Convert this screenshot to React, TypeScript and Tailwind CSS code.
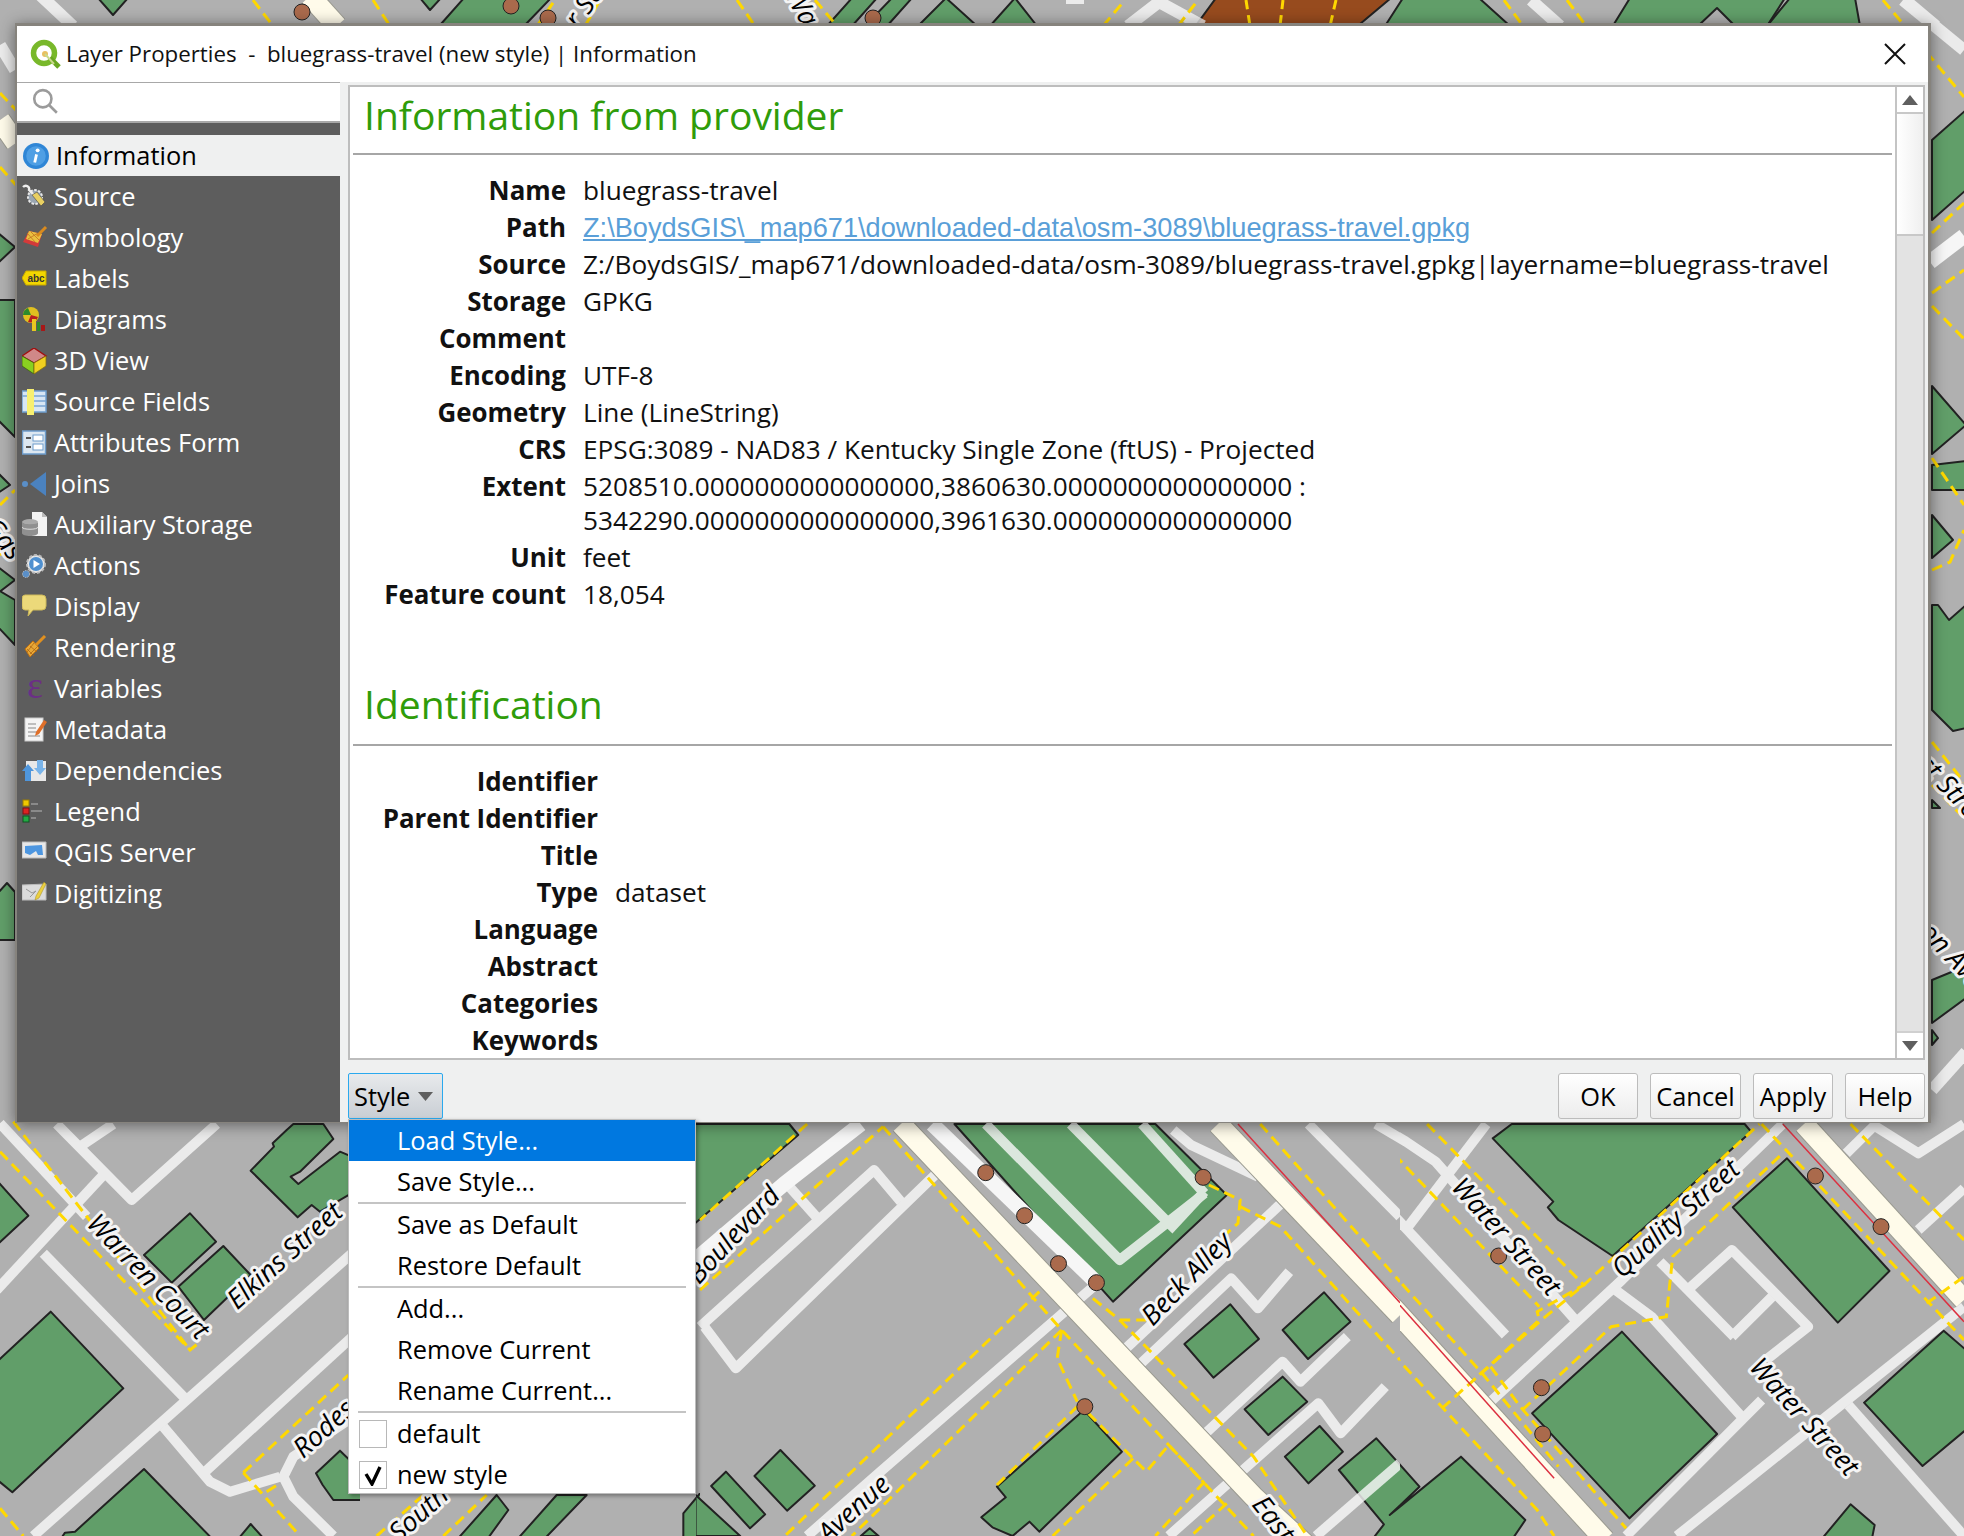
import React from 'react';

type Layer = { b?: string[]; r?: string[]; m?: string[]; y?: string[]; red?: string[]; c?: [number, number][]; brown?: string[]; w?: string[] };

// one piece of the map, drawn in the coordinates of that piece
function Piece({ x, y, w, h, vb, rw = 10, l }: { x: number; y: number; w: number; h: number; vb: string; rw?: number; l: Layer }) {
  const [, , vw, vh] = vb.split(' ').map(Number);
  const rx = (vw / w) * 8;
  const ry = (vh / h) * 8;
  return (
    <svg x={x} y={y} width={w} height={h} viewBox={vb} preserveAspectRatio="none">
      {l.brown?.map((p, i) => <polygon key={i} points={p} fill="#974b1e" stroke="#222" strokeWidth={2} vectorEffect="non-scaling-stroke" />)}
      {l.b?.map((p, i) => <polygon key={i} points={p} fill="#619e69" stroke="#222" strokeWidth={2} strokeLinejoin="round" vectorEffect="non-scaling-stroke" />)}
      <g opacity={0.8}>
        {l.r?.map((p, i) => <polyline key={i} points={p} fill="none" stroke="#fafafa" strokeWidth={rw} strokeLinejoin="round" vectorEffect="non-scaling-stroke" />)}
      </g>
      {l.w?.map((p, i) => <polyline key={i} points={p} fill="none" stroke="#f6f6f6" strokeWidth={15} vectorEffect="non-scaling-stroke" />)}
      {l.m?.map((p, i) => (
        <g key={i}>
          <polyline points={p} fill="none" stroke="#9a9a90" strokeWidth={22} vectorEffect="non-scaling-stroke" />
          <polyline points={p} fill="none" stroke="#fffbea" strokeWidth={20} vectorEffect="non-scaling-stroke" />
        </g>
      ))}
      {l.y?.map((p, i) => <polyline key={i} points={p} fill="none" stroke="#ffd800" strokeWidth={3} strokeDasharray="11 6" vectorEffect="non-scaling-stroke" />)}
      {l.red?.map((p, i) => <polyline key={i} points={p} fill="none" stroke="#dc3040" strokeWidth={1.5} vectorEffect="non-scaling-stroke" />)}
      {l.c?.map(([cx, cy], i) => <ellipse key={i} cx={cx} cy={cy} rx={rx} ry={ry} fill="#aa6a4c" stroke="#222" strokeWidth={1} vectorEffect="non-scaling-stroke" />)}
    </svg>
  );
}

const leftCrop: Layer = {
  b: [
    '570,280 648,365 515,488 432,405',
    '670,378 752,465 612,600 535,500',
    '152,575 370,805 37,1117 -20,1070 -20,735',
    '-20,170 85,287 -20,385',
    '860,30 880,12 970,12 1000,57 900,155 872,170 895,192 1020,95 1080,120 1080,205 960,275 935,255 893,292 752,152 822,80 818,70',
    '432,1047 640,1260 180,1260 195,1238 225,1235',
    '752,1212 795,1260 712,1260',
    '948,1060 1020,992 1090,1060 1090,1140 1000,1140 968,1095',
  ],
  r: [
    '0,10 260,290',
    '170,12 395,240 650,12',
    '-10,510 310,165',
    '240,80 340,12',
    '130,400 560,840',
    '100,1248 1090,370',
    '490,920 630,1085 690,1115 840,1070',
    '610,1060 1090,620',
    '1045,900 880,1010 850,1070 880,1130 1000,1248',
  ],
  y: [
    '40,5 570,690',
    '0,95 570,690 595,670',
    '730,1058 1045,765',
    '730,1058 900,1248',
    '800,1115 840,1090',
    '0,1165 70,1248',
  ],
};

const midCrop: Layer = {
  b: [
    '-20,12 200,12 220,45 -20,320',
    '570,12 1020,12 1180,225 925,545',
    '1188,553 1252,657 1150,773 1085,672',
    '1398,517 1457,605 1362,717 1305,630',
    '1305,770 1360,845 1273,945 1220,868',
    '1388,918 1440,995 1363,1090 1310,1010',
    '1515,955 1612,1100 1545,1185 1705,1010 1849,1200 1819,1260 1505,1260 1532,1213 1431,1050',
    '180,990 257,1097 195,1172 122,1068',
    '58,1055 146,1183 112,1225 25,1098',
    '-10,1125 90,1248 -10,1248',
    '860,870 945,995 760,1235 738,1205 700,1248 655,1222 630,1192 685,1132 665,1100',
    '380,1225 400,1248 360,1248',
  ],
  r: [
    '0,620 390,150 450,245',
    '260,290 200,200',
    '10,620 80,745 530,160',
    '640,12 940,420 1130,220',
    '830,12 1050,310',
    '990,12 1130,220',
    '1050,330 1130,215',
    '890,490 400,1060 240,1248',
    '950,690 1310,240',
    '980,740 1190,475 1250,565 1320,455',
    '1120,955 1305,725 1345,785 1450,650',
    '1050,1248 1385,850 1435,940 1535,800',
    '1380,1248 1568,1030',
    '1060,30 1100,75 1250,170',
    '1363,12 1568,290',
    '1514,12 1581,65',
  ],
  w: ['360,12 190,190 -20,430', '520,12 890,490'],
  m: ['450,12 1240,1130 1370,1290', '1160,12 1568,586'],
  y: [
    '240,12 0,300',
    '0,510 410,20',
    '410,20 810,630 1130,1090',
    '760,515 190,1248',
    '810,630 340,1248',
    '810,630 800,715 845,845',
    '880,535 940,600 1000,600',
    '940,600 1240,1010 1360,1248',
    '1140,195 1210,240 1205,310 1180,340',
    '1210,260 1300,320 1568,720',
    '870,880 970,1015 1000,1055 1050,975 1240,1248',
    '665,1095 845,860',
    '970,1015 790,1248',
    '1130,1085 1020,1248',
    '1180,1150 1100,1248',
    '1255,12 1568,485',
  ],
  red: ['1205,12 1568,548'],
  c: [[640, 158], [727, 287], [803, 431], [888, 488], [1127, 172], [862, 860]],
};

const rightCrop: Layer = {
  b: [
    '455,55 500,12 1050,12 1065,35 738,408 610,300 585,262 598,245',
    '1150,115 1392,453 1270,608 1022,262',
    '760,635 985,942 778,1195 548,880',
    '180,955 282,1100 212,1185 380,1010 532,1200 500,1260 170,1260 198,1213 92,1050',
    '1520,632 1600,720 1600,900 1470,1038 1332,848',
    '1300,1153 1357,1215 1350,1260 1230,1260',
  ],
  r: [
    '20,12 485,645',
    '180,12 250,65 320,125 650,600',
    '440,12 255,320',
    '450,845 760,480 1140,12',
    '745,510 830,590 1050,900',
    '850,425 1025,650',
    '915,510 1020,390 1200,620 1100,720',
    '1020,650 1115,530',
    '1090,840 770,1248',
    '890,1248 1568,560',
    '1295,855 1568,1248',
    '1460,330 1568,205',
    '1290,100 1360,12',
    '1350,12 1460,100 1568,12',
  ],
  m: ['-20,230 720,1260', '1190,12 1568,540'],
  y: [
    '300,12 670,495 560,575 565,600 410,780',
    '215,55 220,100 565,560',
    '0,150 430,760 610,1040',
    '0,400 560,1170 600,1248',
    '335,865 570,600 670,495 1085,12',
    '525,870 735,620 865,590 880,410 1140,100',
    '450,740 520,860 770,1225',
    '1090,12 1568,660',
    '1300,12 1568,360',
    '1480,550 1568,470',
  ],
  red: ['-10,205 600,1075', '1140,12 1568,605'],
  c: [[1217, 168], [1372, 320], [469, 408], [570, 803], [573, 942]],
};

const belowMenu: Layer = {
  b: ['500,1365 535,1410 470,1500 380,1500', '1060,1420 1110,1360 1180,1450 1160,1500 1060,1500', '770,1365 640,1500 560,1500 680,1365', '1145,1330 1200,1395 1200,1300'],
  y: ['140,1488 280,1365', '340,1488 470,1365'],
  r: ['200,1500 330,1365'],
};

// strips round the dialog, in page coordinates
const strips: Layer = {
  brown: ['1216,-2 1391,-2 1360,24 1197,24'],
  b: [
    '98,-2 128,-2 113,15', '420,-2 441,-2 430,10', '464,-2 551,-2 526,24 441,24',
    '827,26 852,-2 877,-2 852,26', '865,26 892,-2 912,-2 887,26', '946,-2 977,26 918,26', '1015,-2 1037,26 990,26',
    '1403,-2 1479,-2 1510,26 1385,26',
    '1630,-2 1614,24 1632,26 1698,26 1717,8 1735,26 1767,26 1785,-2',
    '1790,-2 1855,-2 1860,26 1767,26',
    '1932,140 1966,110 1966,190 1932,220',
    '1932,386 1966,425 1932,454',
    '1932,465 1966,461 1966,490 1932,490',
    '1932,515 1953,540 1932,558',
    '1932,605 1938,605 1949,620 1966,605 1966,728 1953,731 1932,710',
    '1932,800 1940,808 1932,808',
    '1932,980 1966,966 1966,998 1932,1023',
    '1932,1030 1938,1038 1932,1045',
    '-2,233 15,247 -2,263',
    '-2,300 15,300 15,437 -2,420',
    '-2,473 10,485 -2,493',
    '-2,567 15,580 -2,593',
    '-2,590 15,600 15,645 -2,627',
    '-2,893 7,883 15,892 15,940 -2,940',
  ],
  r: ['40,-5 73,26', '1128,26 1159,2 1203,26', '1531,0 1560,26', '1905,0 1936,26', '1903,0 1964,50', '1932,1090 1966,1052', '0,45 15,70', '1066,-2 1084,-2'],
  w: ['1930,262 1964,236'],
  m: ['310,-4 337,26', '0,120 16,143'],
  y: [
    '253,0 273,26', '373,0 390,26', '537,26 555,0', '585,26 600,0', '737,0 755,26', '815,0 837,26', '1103,26 1125,0', '1178,26 1198,0',
    '1504,0 1523,26', '1567,0 1586,26', '1883,0 1964,97', '1932,233 1964,203', '1932,293 1964,270', '1932,306 1964,339', '1932,458 1964,505',
    '1932,570 1950,562 1964,530', '1932,742 1964,782', '1932,785 1964,818', '0,93 16,110', '0,167 16,185', '0,505 15,490', '0,555 15,543',
    '1250,26 1246,0', '1280,26 1283,0', '1330,26 1336,0',
  ],
  c: [[302, 12], [511, 6], [548, 18], [873, 18]],
};

function Label({ x, y, a, t }: { x: number; y: number; a: number; t: string }) {
  return (
    <text
      x={0}
      y={0}
      transform={`translate(${x} ${y}) rotate(${a})`}
      textAnchor="middle"
      dominantBaseline="middle"
      fontFamily="'Open Sans', sans-serif"
      fontStyle="italic"
      fontSize={27}
      fill="#000"
      stroke="#f4f4f4"
      strokeWidth={6}
      strokeLinejoin="round"
      paintOrder="stroke"
    >
      {t}
    </text>
  );
}

function MapBackdrop() {
  return (
    <svg className="absolute inset-0" width={1964} height={1536} viewBox="0 0 1964 1536">
      <rect width={1964} height={1536} fill="#b0b0b0" />
      <Piece x={0} y={0} w={1964} h={1536} vb="0 0 1964 1536" l={strips} rw={12} />
      <Piece x={0} y={1120} w={360} h={416} vb="0 0 1080 1248" l={leftCrop} />
      <Piece x={348} y={1493} w={352} h={43} vb="54 1359 1056 129" l={belowMenu} />
      <Piece x={696} y={1120} w={704} h={416} vb="-9 0 1577 1248" l={midCrop} />
      <Piece x={1400} y={1120} w={564} h={416} vb="236 0 1332 1248" l={rightCrop} />
      <Label x={147} y={1278} a={46} t="Warren Court" />
      <Label x={286} y={1257} a={-42} t="Elkins Street" />
      <Label x={325} y={1430} a={-42} t="Rodes" />
      <Label x={735} y={1236} a={-47} t="Boulevard" />
      <Label x={1188} y={1280} a={-46} t="Beck Alley" />
      <Label x={1505} y={1238} a={48} t="Water Street" />
      <Label x={1677} y={1220} a={-42} t="Quality Street" />
      <Label x={1803} y={1418} a={48} t="Water Street" />
      <Label x={855} y={1510} a={-42} t="Avenue" />
      <Label x={420} y={1515} a={-42} t="South" />
      <Label x={1272} y={1520} a={52} t="East" />
      <Label x={1945} y={785} a={46} t="East Street" />
      <Label x={1930} y={935} a={46} t="Jackson Ave" />
      <Label x={585} y={8} a={-55} t="r Sc" />
      <Label x={800} y={8} a={60} t="Wa" />
      <Label x={2} y={540} a={50} t="Gas" />
    </svg>
  );
}

const QgisLogo = () => (
  <svg width={32} height={32} viewBox="0 0 32 32">
    <circle cx={14} cy={15} r={10.5} fill="#fff" stroke="#78b82a" strokeWidth={5.5} />
    <path d="M20 20 L29 29" stroke="#6aa622" strokeWidth={5} />
    <circle cx={15} cy={16} r={3} fill="#e8c060" />
    <path d="M15 16 L24 26" stroke="#c9d98a" strokeWidth={2} />
  </svg>
);

const icons: Record<string, React.ReactNode> = {
  Information: (
    <>
      <circle cx={12} cy={12} r={12} fill="#2f86d6" />
      <circle cx={12} cy={12} r={9} fill="#4f9fe4" />
      <circle cx={13.5} cy={6.8} r={1.8} fill="#fff" />
      <path d="M12.5 10.5 L10.8 18" stroke="#fff" strokeWidth={2.6} />
    </>
  ),
  Source: (
    <>
      <circle cx={13} cy={13} r={7} fill="#9aa6b2" stroke="#e8e8e8" strokeWidth={2} strokeDasharray="2.5 1.5" />
      <path d="M1 3 C4 0 8 3 7 6 L13 12" stroke="#eee" strokeWidth={2.4} fill="none" />
      <path d="M10 11 L15 8 L23 18 L19 22 Z" fill="#e8cf62" stroke="#444" strokeWidth={0.6} />
    </>
  ),
  Symbology: (
    <>
      <path d="M7 6 L20 9 L16 22 L1 17 Z" fill="#d33a3a" />
      <path d="M7 6 L20 9 L16 18 L4 14 Z" fill="#e9c040" />
      <path d="M15 11 L24 2" stroke="#d98a1e" strokeWidth={3} />
      <path d="M5 8 L14 18 M9 7 L17 15 M6 14 L16 8" stroke="#c07020" strokeWidth={0.8} />
    </>
  ),
  Labels: (
    <>
      <path d="M4 5 H24 V19 H4 L0 12 Z" fill="#f2d600" stroke="#c8a800" />
      <text x={14} y={16} textAnchor="middle" fontSize={10} fontWeight={700} fontFamily="'Liberation Sans', sans-serif" fill="#333">abc</text>
    </>
  ),
  Diagrams: (
    <>
      <circle cx={9} cy={8} r={8} fill="#e0c020" />
      <path d="M9 8 L1 8 A8 8 0 0 1 6 1 Z" fill="#2c8a2c" />
      <path d="M9 8 L16 10 A8 8 0 0 1 6 15 Z" fill="#b82020" />
      <rect x={10} y={12} width={4} height={12} fill="#e8c820" />
      <rect x={15} y={15} width={3} height={9} fill="#2c8a2c" />
      <rect x={19} y={18} width={4} height={6} fill="#a81818" />
    </>
  ),
  '3D View': (
    <>
      <path d="M12 0 L24 8 L12 15 L0 8 Z" fill="#d08888" stroke="#a01010" strokeWidth={1.4} />
      <path d="M0 8 L12 15 V26 L0 18 Z" fill="#8ad020" stroke="#406010" strokeWidth={0.8} />
      <path d="M24 8 L12 15 V26 L24 18 Z" fill="#f0d020" stroke="#807010" strokeWidth={0.8} />
    </>
  ),
  'Source Fields': (
    <>
      <rect x={0} y={2} width={24} height={21} fill="#d8e6f4" stroke="#6f9fcf" strokeWidth={1.5} />
      <path d="M0 7 H24 M8 12 H24 M8 17 H24" stroke="#7aa5d2" strokeWidth={1.5} />
      <rect x={5} y={0} width={7} height={26} fill="#f7ef70" />
    </>
  ),
  'Attributes Form': (
    <>
      <rect x={0.5} y={1} width={23} height={23} fill="#dce7f1" stroke="#6d9ccb" strokeWidth={1.5} />
      <rect x={11} y={5} width={10} height={6} fill="#fff" stroke="#6d9ccb" />
      <rect x={11} y={14} width={10} height={6} fill="#fff" stroke="#6d9ccb" />
      <path d="M4 8 H9 M4 17 H9" stroke="#555" strokeWidth={2} />
    </>
  ),
  Joins: (
    <>
      <circle cx={3} cy={13} r={3} fill="#5a8fc8" />
      <path d="M8 13 L24 1 V25 Z" fill="#4b82bf" />
    </>
  ),
  'Auxiliary Storage': (
    <>
      <path d="M10 0 H20 L25 5 V24 H10 Z" fill="#f2f2f2" />
      <path d="M20 0 V5 H25 Z" fill="#bbb" />
      <ellipse cx={8} cy={10} rx={8} ry={3} fill="#aaa" />
      <path d="M0 10 V21 C0 25 16 25 16 21 V10 C16 13 0 13 0 10 Z" fill="#909090" />
      <path d="M0 15 C0 18 16 18 16 15" stroke="#ddd" fill="none" />
    </>
  ),
  Actions: (
    <>
      <circle cx={14} cy={11} r={9} fill="#e8e8e8" stroke="#bbb" strokeWidth={2} strokeDasharray="3 2" />
      <circle cx={14} cy={11} r={7} fill="#4f90d0" />
      <path d="M11.5 7 L18 11 L11.5 15 Z" fill="#fff" />
      <circle cx={4} cy={21} r={3.5} fill="#5a8fc8" stroke="#bbb" strokeDasharray="1.5 1" />
    </>
  ),
  Display: (
    <path d="M3 1 H20 Q24 1 24 5 V12 Q24 16 20 16 H11 L6 22 L7 16 H3 Q0 16 0 12 V5 Q0 1 3 1 Z" fill="#ecd97a" stroke="#cdb95a" />
  ),
  Rendering: (
    <>
      <path d="M3 14 L11 6 L17 13 L8 22 Z" fill="#e8a838" stroke="#c07010" />
      <path d="M5 14 L12 21 M8 11 L15 17 M12 8 L5 17 M15 12 L8 19" stroke="#a86010" strokeWidth={0.7} />
      <path d="M14 10 L23 1" stroke="#e09020" strokeWidth={3} />
    </>
  ),
  Variables: (
    <text x={13} y={22} textAnchor="middle" fontSize={38} fontFamily="'Liberation Serif', serif" fill="#6b2f86">ε</text>
  ),
  Metadata: (
    <>
      <rect x={3} y={1} width={18} height={23} fill="#f4f4f4" stroke="#ccc" />
      <path d="M6 7 H14 M6 11 H14 M6 15 H18 M6 19 H18" stroke="#888" strokeWidth={1.2} />
      <path d="M14 15 L22 3 L25 5 L17 17 L13 19 Z" fill="#e0702a" />
    </>
  ),
  Dependencies: (
    <>
      <rect x={4} y={3} width={20} height={20} fill="#e8e8e8" />
      <path d="M0 13 L6 6 L12 13 H9 V23 H3 V13 Z" fill="#4f96dc" />
      <path d="M24 10 L18 17 L12 10 H15 V2 H21 V10 Z" fill="#79b4ea" />
    </>
  ),
  Legend: (
    <>
      <rect x={1} y={1} width={6} height={6} fill="#f0c800" stroke="#a08000" />
      <rect x={1} y={9} width={6} height={6} fill="#dd2222" stroke="#801010" />
      <rect x={1} y={17} width={6} height={6} fill="#22aa44" stroke="#115522" />
      <path d="M9 5 H16 M9 12 H20 M9 19 H14" stroke="#999" strokeWidth={1.6} />
    </>
  ),
  'QGIS Server': (
    <>
      <path d="M0 2 L24 2 V18 L0 18 Z" fill="#e8e8e8" stroke="#bbb" />
      <path d="M3 6 L20 5 L21 15 L16 15 L14 11 L8 15 L3 13 Z" fill="#4d96e0" />
    </>
  ),
  Digitizing: (
    <>
      <path d="M0 4 L24 3 V19 L0 19 Z" fill="#dcdcdc" stroke="#bbb" />
      <path d="M4 8 L10 12 L14 10 L8 16" stroke="#999" fill="none" />
      <path d="M14 15 L22 1 L24 3 L17 17 L13 19 Z" fill="#ecd040" stroke="#a08a20" strokeWidth={0.5} />
    </>
  ),
};

const sections = ['Source', 'Symbology', 'Labels', 'Diagrams', '3D View', 'Source Fields', 'Attributes Form', 'Joins', 'Auxiliary Storage', 'Actions', 'Display', 'Rendering', 'Variables', 'Metadata', 'Dependencies', 'Legend', 'QGIS Server', 'Digitizing'];

function Sidebar() {
  return (
    <div className="w-[323px] shrink-0 bg-[#5d5d5d] flex flex-col">
      <div className="h-[41px] bg-white border-t border-b-2 border-[#a8a8a8] flex items-center pl-[14px]">
        <svg width={28} height={28} viewBox="0 0 26 26" fill="none" stroke="#9b9b9b" strokeWidth={2.4}>
          <circle cx={11} cy={10} r={8} />
          <path d="M17 16 L24 23" />
        </svg>
      </div>
      <div className="h-[12px]" />
      <div className="h-[41px] bg-[#eff0f0] flex items-center pl-[6px] gap-[7px] text-black">
        <svg width={26} height={26} viewBox="0 0 24 24" className="shrink-0">{icons.Information}</svg>
        <span>Information</span>
      </div>
      {sections.map((s) => (
        <div key={s} className="h-[41px] flex items-center pl-[5px] gap-[6px] text-white">
          <svg width={26} height={26} viewBox="0 0 26 26" className="shrink-0">{icons[s]}</svg>
          <span>{s}</span>
        </div>
      ))}
    </div>
  );
}

type Item = { k: string; v?: React.ReactNode; h?: string };

function InfoRows({ rows, labelW }: { rows: Item[]; labelW: string }) {
  return (
    <div className="flex flex-col text-[26.2px]">
      {rows.map((r) => (
        <div key={r.k} className={`flex ${r.h ?? 'h-[37px]'}`}>
          <div className={`${labelW} shrink-0 text-right font-bold text-[25.9px] leading-[37px]`}>{r.k}</div>
          <div className="pl-[17px] leading-[34px] pt-[1px] whitespace-nowrap">{r.v}</div>
        </div>
      ))}
    </div>
  );
}

const providerRows: Item[] = [
  { k: 'Name', v: 'bluegrass-travel' },
  {
    k: 'Path',
    v: (
      <span className="font-['Liberation_Sans',sans-serif] text-[#5a9fd8] underline text-[27.2px]">
        Z:\BoydsGIS\_map671\downloaded-data\osm-3089\bluegrass-travel.gpkg
      </span>
    ),
  },
  { k: 'Source', v: 'Z:/BoydsGIS/_map671/downloaded-data/osm-3089/bluegrass-travel.gpkg|layername=bluegrass-travel' },
  { k: 'Storage', v: 'GPKG' },
  { k: 'Comment' },
  { k: 'Encoding', v: 'UTF-8' },
  { k: 'Geometry', v: 'Line (LineString)' },
  { k: 'CRS', v: 'EPSG:3089 - NAD83 / Kentucky Single Zone (ftUS) - Projected' },
  {
    k: 'Extent',
    h: 'h-[71px]',
    v: (
      <>
        5208510.0000000000000000,3860630.0000000000000000 :<br />
        5342290.0000000000000000,3961630.0000000000000000
      </>
    ),
  },
  { k: 'Unit', v: 'feet' },
  { k: 'Feature count', v: '18,054' },
];

const identRows: Item[] = [
  { k: 'Identifier' },
  { k: 'Parent Identifier' },
  { k: 'Title' },
  { k: 'Type', v: 'dataset' },
  { k: 'Language' },
  { k: 'Abstract' },
  { k: 'Categories' },
  { k: 'Keywords' },
];

function Heading({ children, leading }: { children: React.ReactNode; leading: string }) {
  return (
    <div className={`h-[68px] mx-[3px] border-b-2 border-[#a6a6a6] pl-[11px] text-[39px] ${leading} text-[#2f9c0a] whitespace-nowrap`}>
      {children}
    </div>
  );
}

function DialogButton({ label, w }: { label: string; w: string }) {
  return (
    <button className={`${w} h-[46px] rounded-[3px] border border-[#bcbcbc] bg-gradient-to-b from-white to-[#ececec] text-black`}>
      {label}
    </button>
  );
}

function Panel() {
  return (
    <div className="flex-1 flex flex-col min-w-0 pl-[8px] pr-[3px] pt-[3px]">
      <div className="h-[975px] shrink-0 flex border-2 border-[#bdbdbd] bg-white overflow-hidden">
        <div className="flex-1 min-w-0 overflow-hidden text-[#111]">
          <Heading leading="leading-[55px]">Information from provider</Heading>
          <div className="h-[17px]" />
          <InfoRows rows={providerRows} labelW="w-[216px]" />
          <div className="h-[65px]" />
          <Heading leading="leading-[52px]">Identification</Heading>
          <div className="h-[17px]" />
          <InfoRows rows={identRows} labelW="w-[248px]" />
        </div>
        <div className="w-[28px] shrink-0 border-l-2 border-[#c4c4c4] flex flex-col bg-[#e3e3e3]">
          <div className="h-[27px] bg-white border-b-2 border-[#c8c8c8] flex items-center justify-center">
            <svg width={16} height={10} viewBox="0 0 16 10"><path d="M8 0 L16 10 H0 Z" fill="#5f5f5f" /></svg>
          </div>
          <div className="h-[122px] bg-gradient-to-r from-white to-[#efefef] border-b-2 border-[#c8c8c8]" />
          <div className="flex-1" />
          <div className="h-[27px] bg-white border-t-2 border-[#d0d0d0] flex items-center justify-center">
            <svg width={16} height={10} viewBox="0 0 16 10"><path d="M8 10 L16 0 H0 Z" fill="#5f5f5f" /></svg>
          </div>
        </div>
      </div>
      <div className="flex-1 flex items-start justify-between pt-[13px]">
        <div className="w-[95px] h-[46px] rounded-[2px] border border-[#2aa9ee] bg-gradient-to-b from-[#e8eaec] to-[#c9ced4] flex items-center pl-[5px] gap-[8px] text-black">
          <span>Style</span>
          <svg width={15} height={9} viewBox="0 0 15 9"><path d="M0 0 H15 L7.5 9 Z" fill="#5f5f5f" /></svg>
        </div>
        <div className="flex gap-[12px]">
          <DialogButton label="OK" w="w-[80px]" />
          <DialogButton label="Cancel" w="w-[91px]" />
          <DialogButton label="Apply" w="w-[80px]" />
          <DialogButton label="Help" w="w-[80px]" />
        </div>
      </div>
    </div>
  );
}

function MenuRow({ label, active, box, checked }: { label: string; active?: boolean; box?: boolean; checked?: boolean }) {
  return (
    <div className={`h-[41px] flex items-center pl-[10px] ${active ? 'bg-[#0078e0] text-white' : 'text-black'}`}>
      <div className="w-[28px] h-[28px] mr-[10px] shrink-0">
        {box && (
          <div className="w-[28px] h-[28px] border border-[#b8b8b8] flex items-center justify-center">
            {checked && (
              <svg width={22} height={22} viewBox="0 0 22 22" fill="none" stroke="#000" strokeWidth={3.4}>
                <path d="M4 10 L10 20 L18 3" />
              </svg>
            )}
          </div>
        )}
      </div>
      <span>{label}</span>
    </div>
  );
}

const Sep = () => <div className="h-[2px] mx-[9px] flex items-center"><div className="h-[1.5px] w-full bg-[#c4c4c4]" /></div>;

function StyleMenu() {
  return (
    <div className="absolute left-[348px] top-[1119px] w-[348px] h-[375px] overflow-hidden bg-white border border-[#bdbdbd] shadow-[2px_2px_4px_rgba(0,0,0,0.35)]">
      <MenuRow label="Load Style..." active />
      <MenuRow label="Save Style..." />
      <Sep />
      <MenuRow label="Save as Default" />
      <MenuRow label="Restore Default" />
      <Sep />
      <MenuRow label="Add..." />
      <MenuRow label="Remove Current" />
      <MenuRow label="Rename Current..." />
      <Sep />
      <MenuRow label="default" box />
      <MenuRow label="new style" box checked />
    </div>
  );
}

export default function App() {
  return (
    <div className="relative w-[1964px] h-[1536px] overflow-hidden font-['Open_Sans',sans-serif] text-[25.4px]">
      <MapBackdrop />
      <div className="absolute left-[15px] top-[23px] w-[1916px] h-[1100px] flex flex-col bg-[#eff0f0] border-t-[3px] border-l-2 border-r-[3px] border-b border-[#86837d] shadow-[0_2px_14px_rgba(0,0,0,0.45)]">
        <div className="h-[56px] shrink-0 bg-white flex items-center pl-[13px] text-[22.3px] text-[#111]">
          <QgisLogo />
          <span className="ml-[4px] whitespace-pre flex-1">Layer Properties  -  bluegrass-travel (new style) | Information</span>
          <svg width={22} height={22} viewBox="0 0 22 22" className="mr-[22px]" stroke="#111" strokeWidth={2}>
            <path d="M1 1 L21 21 M21 1 L1 21" />
          </svg>
        </div>
        <div className="flex flex-1 min-h-0">
          <Sidebar />
          <Panel />
        </div>
      </div>
      <StyleMenu />
    </div>
  );
}
